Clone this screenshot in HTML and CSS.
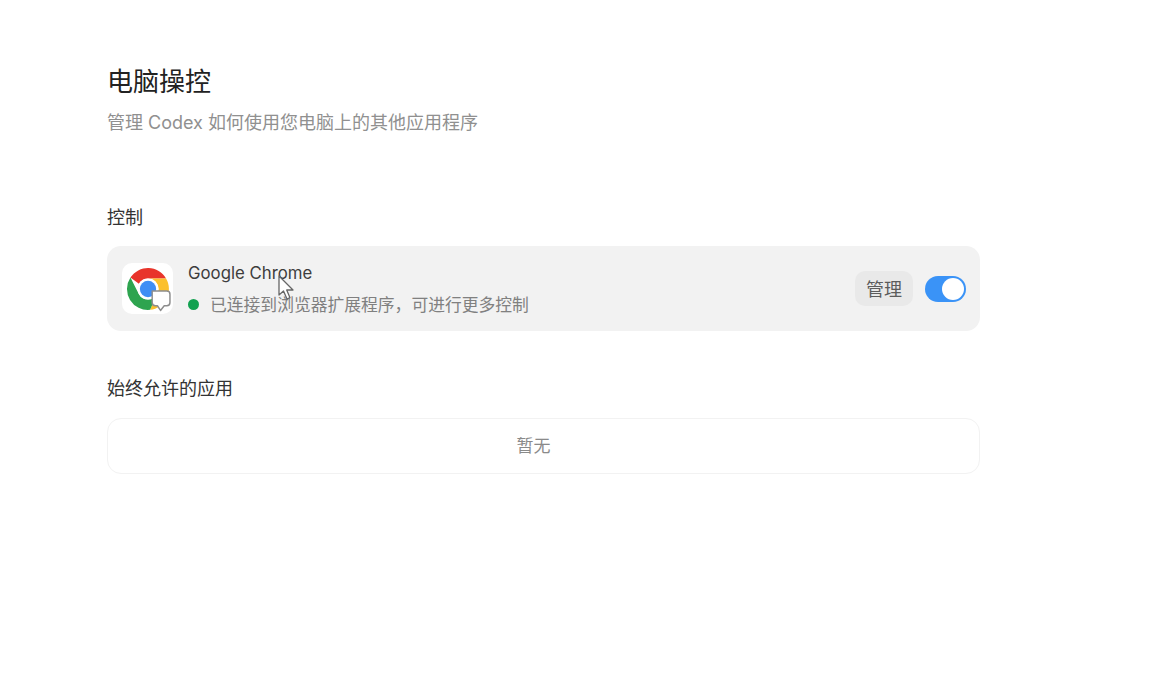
FILE: index.html
```html
<!DOCTYPE html>
<html lang="zh-CN">
<head>
  <meta charset="utf-8" />
  <title>电脑操控</title>
  <link rel="stylesheet" href="styles.css">
</head>
<body>
  <main class="page">
    <h1 class="title">电脑操控</h1>
    <p class="subtitle">管理 Codex 如何使用您电脑上的其他应用程序</p>

    <h2 class="section-title section-control">控制</h2>
    <div class="app-row">
      <div class="app-icon">
        <svg width="46" height="46" viewBox="0 0 44 44" aria-hidden="true">
          <path d="M5.2 11 A20 20 0 0 1 39.300 12 L22 12 A10 10 0 0 0 13.300 17 Z" fill="#e8352b"/>
          <path d="M39.300 12 A20 20 0 0 1 24 41.900 L30.700 27 A10 10 0 0 0 22 12 Z" fill="#fbc02d"/>
          <path d="M5.200 11 L13.300 27 A10 10 0 0 0 30.700 27 L24 41.900 A20 20 0 0 1 5.200 11 Z" fill="#2ea44f"/>
          <circle cx="22" cy="22" r="10" fill="#fff"/>
          <circle cx="22" cy="22" r="7.800" fill="#3f8ef5"/>
          <path d="M26 24 H40 A3 3 0 0 1 43 27 V35 A3 3 0 0 1 40 38 H37.500 L34 42.500 L31 38 H29 A3 3 0 0 1 26 35 Z" fill="#fff" stroke="#8d8d8d" stroke-width="1.400" stroke-linejoin="round"/>
        </svg>
      </div>
      <div class="app-info">
        <div class="app-name">Google Chrome</div>
        <div class="app-status"><span class="dot"></span>已连接到浏览器扩展程序，可进行更多控制</div>
      </div>
      <button class="manage-btn" type="button">管理</button>
      <span class="toggle"><span class="knob"></span></span>
    </div>

    <h2 class="section-title section-allowed">始终允许的应用</h2>
    <div class="empty-box">暂无</div>
  </main>

  <svg class="cursor" width="18" height="26" viewBox="0 0 18 26" aria-hidden="true">
    <path d="M1 1 V20 L5.500 16 L9 24 L12 22.700 L8.700 15 H15 Z" fill="#fff" stroke="#666" stroke-width="1.300" stroke-linejoin="round"/>
  </svg>
</body>
</html>
```

FILE: styles.css
```css
* { box-sizing: border-box; }
html, body {
  margin: 0;
  height: 100%;
  background: #fff;
  color: #1f1f1f;
  font-family: "Inter", "Noto Sans CJK SC", sans-serif;
}
.page {
  width: 873px;
  margin-left: 107px;
  padding-top: 66px;
}
.title {
  margin: 0;
  font-size: 26px;
  font-weight: 400;
  line-height: 32px;
  color: #222;
}
.subtitle {
  margin: 13px 0 0;
  font-size: 18px;
  line-height: 24px;
  color: #909090;
}
.section-title {
  margin: 0;
  font-size: 18px;
  font-weight: 400;
  line-height: 24px;
  color: #333;
}
.section-control { margin-top: 71px; }
.section-allowed { margin-top: 46px; }

.app-row {
  display: flex;
  align-items: center;
  height: 85px;
  margin-top: 16px;
  padding: 0 14px 0 15px;
  background: #f2f2f2;
  border-radius: 14px;
}
.app-icon {
  display: flex;
  align-items: center;
  justify-content: center;
  width: 51px;
  height: 51px;
  background: #fff;
  border-radius: 10px;
}
.app-info {
  flex: 1;
  margin-left: 15px;
}
.app-name {
  font-size: 16.800px;
  line-height: 24px;
  color: #3d3d3d;
}
.app-status {
  display: flex;
  align-items: center;
  margin-top: 8px;
  font-size: 16.800px;
  line-height: 24px;
  color: #808080;
}
.dot {
  width: 11px;
  height: 11px;
  margin-right: 11px;
  border-radius: 50%;
  background: #12a150;
}
.manage-btn {
  width: 58px;
  height: 35px;
  padding: 0 0 2px;
  border: 0;
  border-radius: 10px;
  background: #e9e9e9;
  color: #5c5c5c;
  font: inherit;
  font-size: 18px;
}
.toggle {
  display: flex;
  align-items: center;
  justify-content: flex-end;
  width: 41px;
  height: 26px;
  margin-left: 12px;
  padding-right: 2px;
  border-radius: 13px;
  background: #3a93f7;
}
.knob {
  width: 22px;
  height: 22px;
  border-radius: 50%;
  background: #fff;
}
.empty-box {
  display: flex;
  align-items: center;
  justify-content: center;
  height: 56px;
  margin-top: 17px;
  padding: 0 20px 3px 0;
  border: 1px solid #f2f2f2;
  border-radius: 14px;
  font-size: 17px;
  color: #8a8a8a;
}
.cursor {
  position: absolute;
  left: 278px;
  top: 275px;
}
```
